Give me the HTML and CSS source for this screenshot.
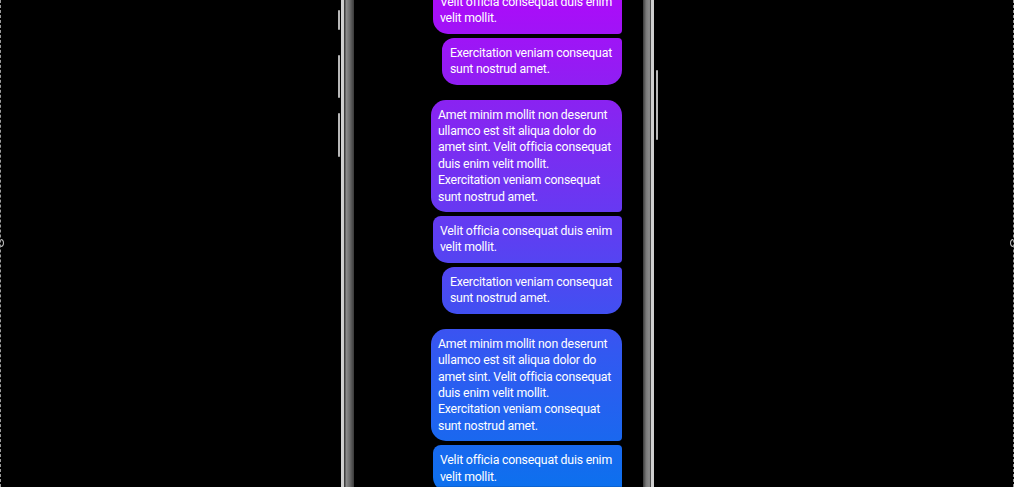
FILE: index.html
```html
<!DOCTYPE html>
<html>
<head>
<meta charset="utf-8">
<link rel="stylesheet" href="styles.css">
</head>
<body>
<div class="stage">
  <span class="handle handle-left"></span>
  <span class="handle handle-right"></span>
  <div class="phone">
    <span class="btn btn-l1"></span>
    <span class="btn btn-l2"></span>
    <span class="btn btn-l3"></span>
    <span class="btn btn-r1"></span>
    <div class="rim"></div>
    <div class="bezel bezel-left"></div>
    <div class="screen">
      <div class="thread">
        <div class="group">
          <div class="bubble mid">Velit officia consequat duis enim<br>velit mollit.</div>
          <div class="bubble last">Exercitation veniam consequat<br>sunt nostrud amet.</div>
        </div>
        <div class="group">
          <div class="bubble first">Amet minim mollit non deserunt ullamco est sit aliqua dolor do amet sint. Velit officia consequat duis enim velit mollit. Exercitation veniam consequat sunt nostrud amet.</div>
          <div class="bubble mid">Velit officia consequat duis enim<br>velit mollit.</div>
          <div class="bubble last">Exercitation veniam consequat<br>sunt nostrud amet.</div>
        </div>
        <div class="group">
          <div class="bubble first">Amet minim mollit non deserunt ullamco est sit aliqua dolor do amet sint. Velit officia consequat duis enim velit mollit. Exercitation veniam consequat sunt nostrud amet.</div>
          <div class="bubble mid">Velit officia consequat duis enim<br>velit mollit.</div>
          <div class="bubble last">Exercitation veniam consequat<br>sunt nostrud amet.</div>
        </div>
      </div>
    </div>
    <div class="bezel bezel-right"></div>
    <div class="rim"></div>
  </div>
</div>
</body>
</html>
```
FILE: styles.css
```css
html, body {
  margin: 0;
  padding: 0;
  background: #000;
  overflow: hidden;
}
.stage {
  position: relative;
  width: 1014px;
  height: 487px;
  box-sizing: border-box;
  border-left: 1px dashed #9a9a9a;
  border-right: 1px dashed #9a9a9a;
  display: flex;
  padding-left: 340px;
  overflow: hidden;
}
.handle {
  position: absolute;
  top: 239px;
  width: 5px;
  height: 6px;
  border: 1px solid #bbb;
  border-radius: 50%;
  background: #000;
}
.handle-left { left: -4px; }
.handle-right { right: -4px; }

.phone {
  position: relative;
  width: 313px;
  height: 100%;
  display: flex;
}
.rim {
  width: 3px;
  background: #cfcfcf;
}
.bezel {
  background: linear-gradient(90deg, #2a2a2a 0%, #8a8a8a 25%, #6a6a6a 60%, #3a3a3a 100%);
}
.bezel-left { width: 10px; }
.bezel-right {
  width: 8px;
  background: linear-gradient(90deg, #3a3a3a 0%, #7a7a7a 40%, #8c8c8c 80%, #2a2a2a 100%);
}
.btn {
  position: absolute;
  width: 2px;
  background: #b8b8b8;
  border-radius: 1px;
}
.btn-l1 { left: -3px; top: 10px; height: 20px; }
.btn-l2 { left: -3px; top: 55px; height: 43px; }
.btn-l3 { left: -3px; top: 113px; height: 44px; }
.btn-r1 { right: -4px; top: 70px; height: 70px; }

.screen {
  flex: 1;
  background: #000;
  overflow: hidden;
}
.thread {
  display: flex;
  flex-direction: column;
  align-items: flex-end;
  gap: 15px;
  padding-right: 21px;
  margin-top: -13px;
}
.group {
  display: flex;
  flex-direction: column;
  align-items: flex-end;
  gap: 4px;
}
.bubble {
  max-width: 191px;
  box-sizing: border-box;
  padding: 7px 10px 7px 7px;
  font-family: Roboto, "Liberation Sans", sans-serif;
  font-size: 12.3px;
  letter-spacing: -0.2px;
  line-height: 16.4px;
  color: #fff;
  background-image: linear-gradient(180deg, #ab0cf9 0%, #8824f1 22%, #5f3ef2 48%, #3358f1 72%, #0d70ee 100%);
  background-attachment: fixed;
  background-size: 1014px 487px;
}
.first { border-radius: 15px 15px 4px 15px; }
.mid { border-radius: 8px 4px 4px 15px; }
.last { border-radius: 12px 4px 15px 15px; padding-left: 8px; }
```
